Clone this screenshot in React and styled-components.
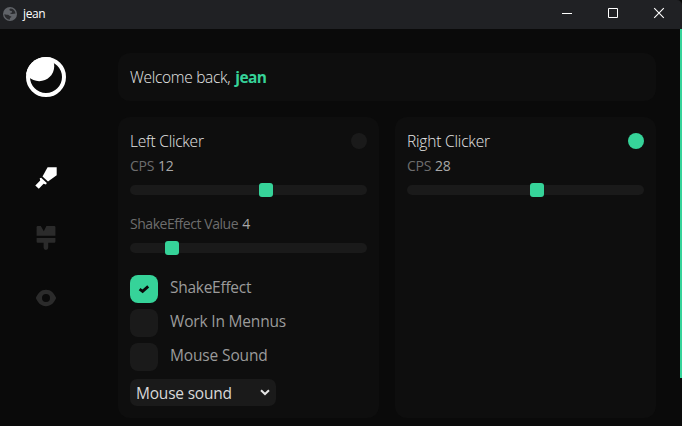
import React from "react";
import styled, { createGlobalStyle } from "styled-components";

const Global = createGlobalStyle`
  * { box-sizing: border-box; }
  body { margin: 0; background: #0a0a0a; overflow: hidden; font-family: "Open Sans", "Noto Sans", sans-serif; }
`;

const accent = "#36d399";

const Window = styled.div`
  width: 682px;
  height: 426px;
  display: flex;
  flex-direction: column;
  background: #0a0a0a;
  overflow: hidden;
`;
const TitleBar = styled.header`
  height: 29px;
  flex: none;
  display: flex;
  align-items: center;
  justify-content: space-between;
  background: #202124;
  color: #fff;
  border-radius: 0 5px 0 0;
`;
const TitleName = styled.div`
  display: flex;
  align-items: center;
  gap: 6px;
  height: 27px;
  margin-bottom: 2px;
  padding-left: 3px;
`;
const Controls = styled.svg`
  width: 142px;
  height: 29px;
`;
const Body = styled.div`
  flex: 1;
  min-height: 0;
  display: flex;
`;
const Sidebar = styled.nav`
  width: 92px;
  flex: none;
  display: flex;
  flex-direction: column;
  align-items: center;
  padding-top: 28px;
`;
const Logo = styled.svg`
  width: 40px;
  height: 40px;
  margin-bottom: 69px;
`;
const NavIcon = styled.svg`
  width: 24px;
  height: 24px;
  margin-bottom: 36px;
  color: ${(p) => (p.$active ? "#fff" : "#2b2b2b")};
`;
const Main = styled.main`
  flex: 1;
  display: flex;
  flex-direction: column;
  gap: 16px;
  padding: 24px 24px 0 26px;
`;
const ScrollThumb = styled.div`
  width: 2px;
  height: 349px;
  background: ${accent};
`;
const Panel = styled.section`
  background: #0e0e0e;
  border-radius: 12px;
  padding: 12px;
`;
const Welcome = styled(Panel)`
  height: 48px;
  display: flex;
  align-items: center;
  gap: 5px;
`;
const Columns = styled.div`
  display: grid;
  grid-template-columns: 261px 261px;
  gap: 16px;
  height: 301px;
`;
const Text = styled.span`
  font-size: ${(p) => p.$size || 15.5}px;
  font-weight: ${(p) => p.$weight || 400};
  letter-spacing: ${(p) => p.$track || 0}px;
  color: ${(p) => p.$color || "#cfcfcf"};
  line-height: 24px;
  white-space: pre;
`;
const Heading = styled(Text)`
  font-weight: 300;
  color: #e6e6e6;
`;
const PanelHead = styled.div`
  height: 24px;
  display: flex;
  align-items: center;
  justify-content: space-between;
`;
const Toggle = styled.span`
  width: 16px;
  height: 16px;
  border-radius: 50%;
  background: ${(p) => (p.$on ? accent : "#1a1a1a")};
`;
const Field = styled.div`
  height: 58px;
`;
const FieldLabel = styled.div`
  height: 25px;
  padding-top: 1px;
  display: flex;
  align-items: center;
  gap: 4px;
`;
const Track = styled.div`
  height: 10px;
  margin-top: 7px;
  display: flex;
  align-items: center;
  border-radius: 5px;
  background: #1a1a1a;
`;
const Thumb = styled.span`
  width: 14px;
  height: 14px;
  border-radius: 3px;
  background: ${accent};
`;
const Checks = styled.div`
  display: flex;
  flex-direction: column;
  gap: 6px;
  padding-top: 6px;
`;
const CheckRow = styled.label`
  display: flex;
  height: 28px;
  gap: 12px;
`;
const Box = styled.span`
  width: 28px;
  height: 28px;
  display: grid;
  place-items: center;
  border-radius: 8px;
  background: ${(p) => (p.$on ? accent : "#1a1a1a")};
`;
const CheckText = styled(Text)`
  color: #9b9b9b;
`;
const Select = styled.div`
  width: 146px;
  height: 27px;
  margin-top: 8px;
  padding: 2px 6px 0;
  display: flex;
  justify-content: space-between;
  background: #1a1a1a;
  border-radius: 7px;
`;
const Chevron = styled.svg`
  width: 10px;
  height: 7px;
  margin-top: 8px;
`;

function Slider({ label, track, value, offset }) {
  return (
    <Field>
      <FieldLabel>
        <Text $size={14} $color="#6d6d6d" $track={track}>{label}</Text>
        <Text $size={14} $color="#a8a8a8" $track={-0.3}>{value}</Text>
      </FieldLabel>
      <Track><Thumb style={{ marginLeft: offset }} /></Track>
    </Field>
  );
}

function Check({ label, on, track }) {
  return (
    <CheckRow>
      <Box $on={on}>
        {on && (
          <svg width="12" height="10" viewBox="0 0 12 10">
            <path d="M1.6 5.2 4.6 7.4 10.2 2.4" fill="none" stroke="#0a0a0a" strokeWidth="2.8" />
          </svg>
        )}
      </Box>
      <CheckText $track={track}>{label}</CheckText>
    </CheckRow>
  );
}

export default function App() {
  return (
    <Window>
      <Global />
      <TitleBar>
        <TitleName>
          <svg width="14" height="14" viewBox="0 0 14 14">
            <circle cx="7" cy="7" r="7" fill="#606368" />
            <path d="M7.7 1.4C6 2 6 3.2 7.3 3.7L9 4.2V5.6L7 6.1C8.1 7.7 10.7 7 12.5 6.6A5.7 5.7 0 0 0 7.7 1.4ZM1.3 7.2C2.7 8 5 7.1 6.2 8.5 7 9.5 8.4 9 8.5 10.1 7.1 10.5 6.8 11.4 6.8 12.7A5.7 5.7 0 0 1 1.3 7.2Z" fill="#2a2b2e" />
          </svg>
          <Text $size={12} $track={-0.4} $color="#fff">jean</Text>
        </TitleName>
        <Controls viewBox="0 0 142 29" fill="none" stroke="#fff">
          <path d="M22 13.5H32M68.5 8.5H77.5V17.5H68.5Z" />
          <path d="M114.2 8.2 123.8 17.8M123.8 8.2 114.2 17.8" strokeWidth="1.1" />
        </Controls>
      </TitleBar>
      <Body>
        <Sidebar>
          <Logo viewBox="0 0 40 40">
            <circle cx="20" cy="20" r="18" fill="#0a0a0a" stroke="#fff" strokeWidth="4" />
            <circle cx="13.2" cy="9.2" r="15" fill="#fff" clipPath="url(#disc)" />
            <clipPath id="disc"><circle cx="20" cy="20" r="20" /></clipPath>
          </Logo>
          <NavIcon $active viewBox="34 166 24 24">
            <path d="M47.6 167.3H56.7V175.2L48 181.6 42.5 176.6Z" fill="currentColor" />
            <path d="M41.2 177.8 46.8 183 46 184.4 43.6 183.8 38.8 188.8 35.3 185.6 40.2 180.6 39.7 178.3Z" fill="currentColor" />
          </NavIcon>
          <NavIcon viewBox="34 226 24 24">
            <path d="M37.6 226H40.8L43.8 231.2 46.4 226H54.4Q55.4 226 55.4 227V235.8H36.6V227Q36.6 226 37.6 226ZM36.6 238H55.4V241.5Q55.4 242.7 54.2 242.7H48.2V247.6A2.3 2.3 0 0 1 43.6 247.6V242.7H37.8Q36.6 242.7 36.6 241.5Z" fill="currentColor" />
          </NavIcon>
          <NavIcon viewBox="34 286 24 24">
            <path fillRule="evenodd" d="M46 289.8C51 289.8 54 293.2 56.2 298 54 302.8 51 306.2 46 306.2S38 302.8 35.8 298C38 293.2 41 289.8 46 289.8ZM46 294A4 4 0 1 0 46 302 4 4 0 1 0 46 294Z" fill="currentColor" />
          </NavIcon>
        </Sidebar>
        <Main>
          <Welcome>
            <Heading $track={-0.3}>Welcome back,</Heading>
            <Text $weight={700} $track={-0.6} $color={accent}>jean</Text>
          </Welcome>
          <Columns>
            <Panel>
              <PanelHead><Heading $track={-0.22}>Left Clicker</Heading><Toggle /></PanelHead>
              <Slider label="CPS" track={-0.3} value="12" offset={129} />
              <Slider label="ShakeEffect Value" track={-0.45} value="4" offset={35} />
              <Checks>
                <Check on label="ShakeEffect" track={-0.27} />
                <Check label="Work In Mennus" track={-0.18} />
                <Check label="Mouse Sound" track={-0.14} />
              </Checks>
              <Select>
                <Text $color="#d8d8d8" $track={-0.2}>Mouse sound</Text>
                <Chevron viewBox="0 0 10 7">
                  <path d="M1 1.2 5 5 9 1.2" fill="none" stroke="#e4e4e4" strokeWidth="2" />
                </Chevron>
              </Select>
            </Panel>
            <Panel>
              <PanelHead><Heading $track={-0.18}>Right Clicker</Heading><Toggle $on /></PanelHead>
              <Slider label="CPS" track={-0.3} value="28" offset={123} />
            </Panel>
          </Columns>
        </Main>
        <ScrollThumb />
      </Body>
    </Window>
  );
}
